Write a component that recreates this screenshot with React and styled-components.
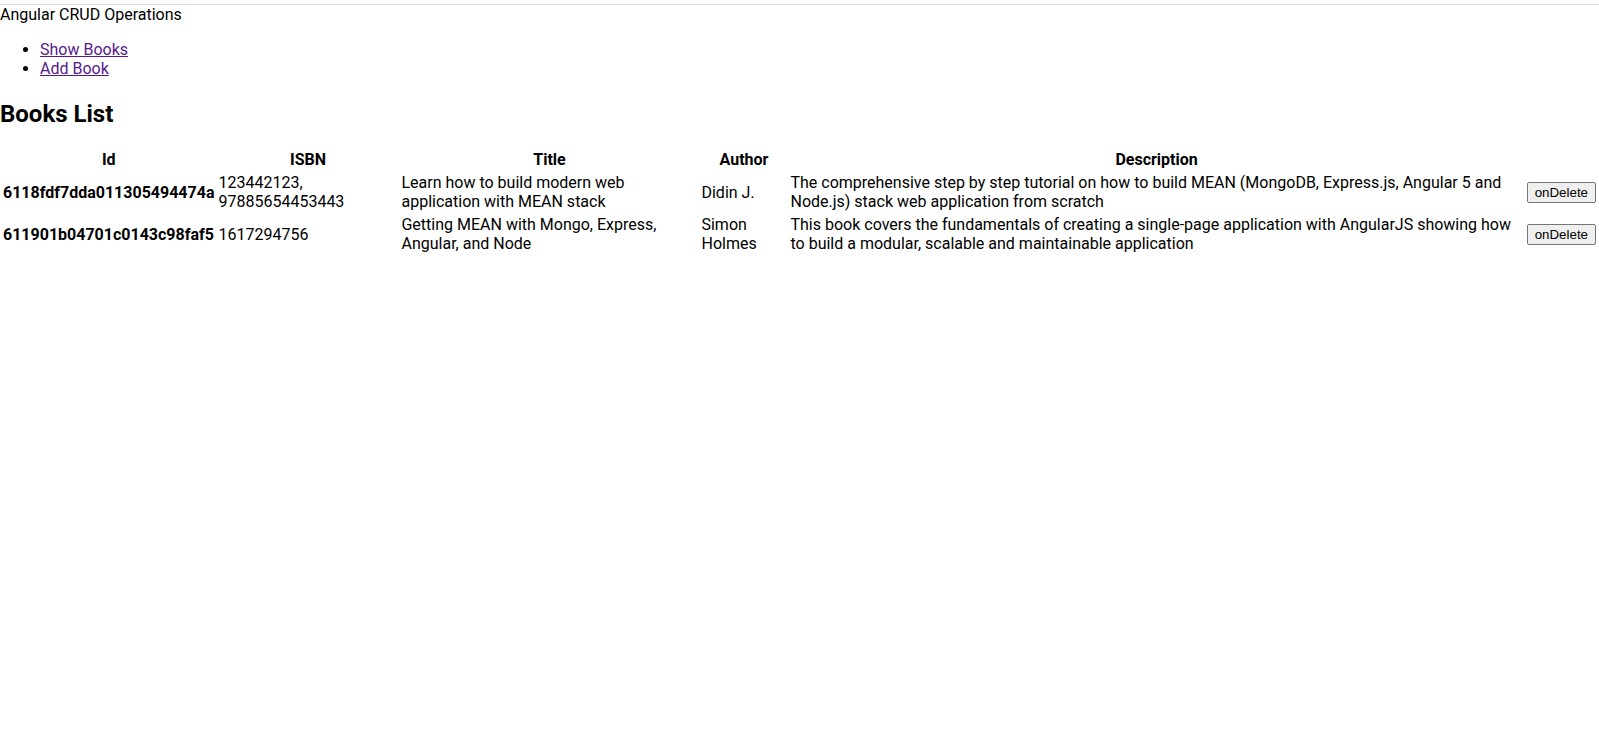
import React from 'react';
import styled, { createGlobalStyle } from 'styled-components';

const books = [
	{
		_id: '6118fdf7dda011305494474a',
		isbn: '123442123, 97885654453443',
		title: 'Learn how to build modern web application with MEAN stack',
		author: 'Didin J.',
		description:
			'The comprehensive step by step tutorial on how to build MEAN (MongoDB, Express.js, Angular 5 and Node.js) stack web application from scratch',
	},
	{
		_id: '611901b04701c0143c98faf5',
		isbn: '1617294756',
		title: 'Getting MEAN with Mongo, Express, Angular, and Node',
		author: 'Simon Holmes',
		description:
			'This book covers the fundamentals of creating a single-page application with AngularJS showing how to build a modular, scalable and maintainable application',
	},
];

const App = () => {
	return (
		<React.Fragment>
			<GlobalStyle />
			<TopLine />
			<Brand>Angular CRUD Operations</Brand>
			<NavList>
				<li>
					<NavLink href="#books">Show Books</NavLink>
				</li>
				<li>
					<NavLink href="#add">Add Book</NavLink>
				</li>
			</NavList>
			<Heading>Books List</Heading>
			<BookTable>
				<thead>
					<tr>
						<Th w="210px">Id</Th>
						<Th w="179px">ISBN</Th>
						<Th w="296px">Title</Th>
						<Th w="85px">Author</Th>
						<Th>Description</Th>
						<Th w="69px"></Th>
					</tr>
				</thead>
				<tbody>
					{books.map(e => {
						return (
							<tr key={e._id}>
								<Td bold>{e._id}</Td>
								<Td>{e.isbn}</Td>
								<Td>{e.title}</Td>
								<Td>{e.author}</Td>
								<Td>{e.description}</Td>
								<Td>
									<DeleteBtn onClick={() => console.log(e._id)}>onDelete</DeleteBtn>
								</Td>
							</tr>
						);
					})}
				</tbody>
			</BookTable>
		</React.Fragment>
	);
};
export default App;

const GlobalStyle = createGlobalStyle`
	body {
		margin: 0;
		font-family: Roboto, "Liberation Sans", sans-serif;
		font-size: 16px;
		color: #000;
		background: #fff;
	}
`;

const TopLine = styled.div`
	margin-top: 4px;
	border-top: 1px solid #dcdcdc;
`;

const Brand = styled.div`
	line-height: 19px;
`;

const NavList = styled.ul`
	margin: 16px 0;
	padding-left: 40px;
	& li {
		line-height: 19px;
	}
`;

const NavLink = styled.a`
	color: #551a8b;
	text-decoration: underline;
`;

const Heading = styled.h2`
	font-size: 24px;
	font-weight: 700;
	margin: 22px 0 19px;
	line-height: 28px;
`;

const BookTable = styled.table`
	width: 100%;
	border-spacing: 2px;
	font-size: 16px;
`;

const Th = styled.th`
	width: ${props => props.w || 'auto'};
	padding: 1px;
	font-weight: 700;
	text-align: center;
	line-height: 19px;
`;

const Td = styled.td`
	padding: 1px;
	line-height: 19px;
	font-weight: ${props => (props.bold ? 700 : 400)};
	vertical-align: middle;
`;

const DeleteBtn = styled.button`
	font-family: "Liberation Sans", Arial, sans-serif;
	font-size: 13.33px;
	padding: 2px 7px;
	border: 1px solid #767676;
	border-radius: 2px;
	background-color: #efefef;
	cursor: pointer;
`;
